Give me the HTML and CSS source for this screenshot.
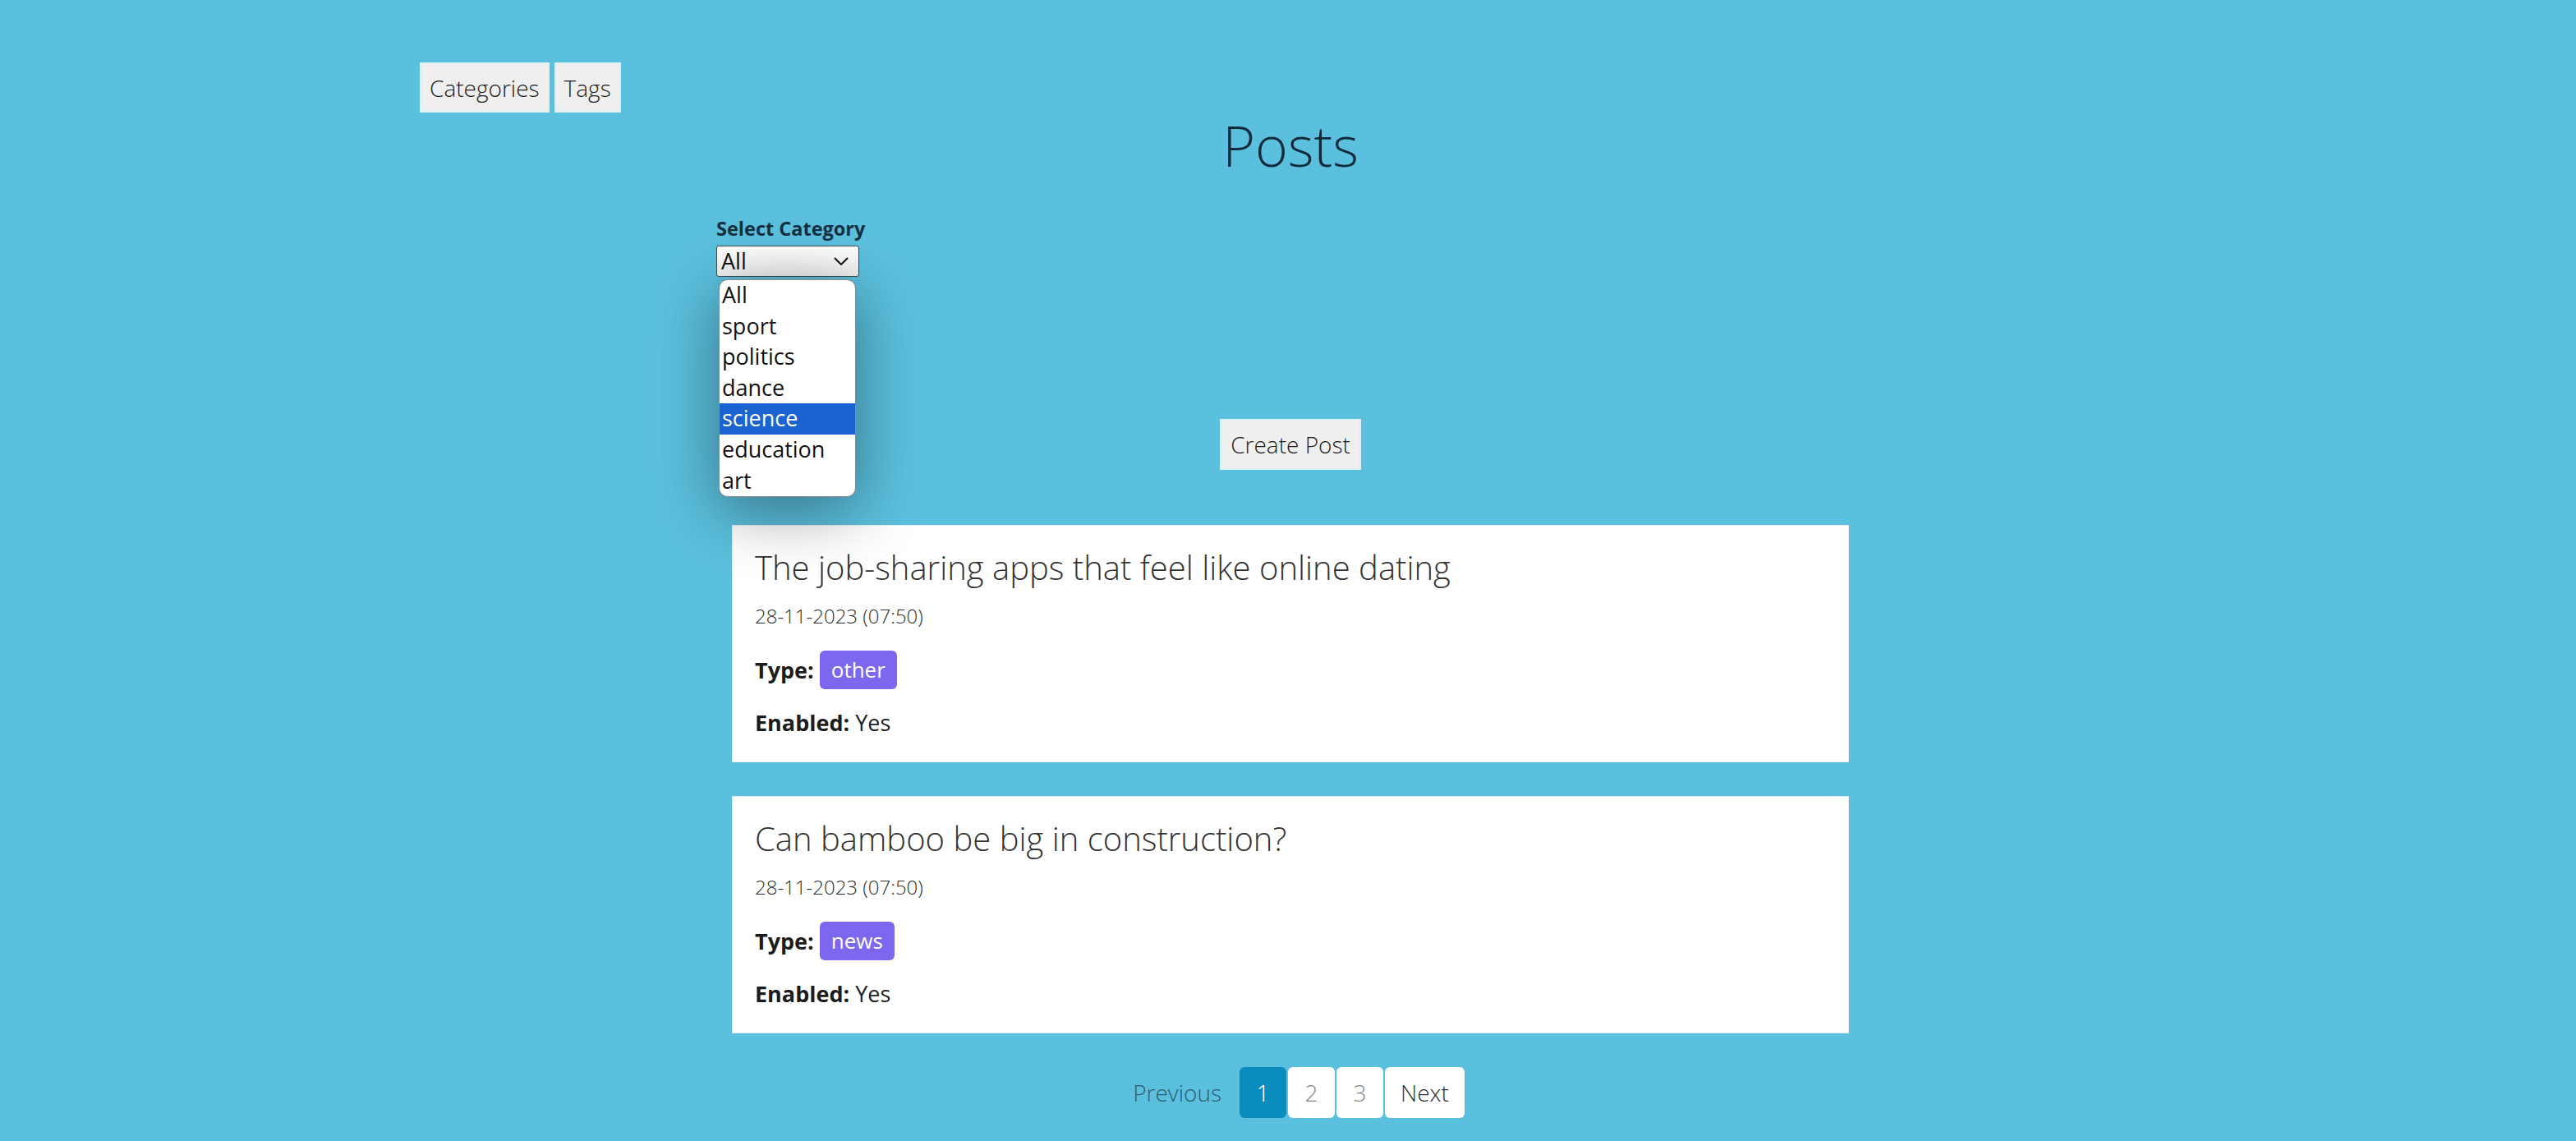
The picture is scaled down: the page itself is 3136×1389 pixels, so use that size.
FILE: index.html
```html
<!DOCTYPE html>
<html lang="en">
<head>
<meta charset="utf-8">
<title>Posts</title>
<link rel="stylesheet" href="styles.css">
</head>
<body>
<nav class="topnav">
  <button class="btn">Categories</button>
  <button class="btn">Tags</button>
</nav>
<main class="main">
  <h1 class="page-title">Posts</h1>
  <div class="filter">
    <label class="filter-label">Select Category</label>
    <div class="select-wrap">
      <div class="select">
        <span>All</span>
        <svg class="chevron" width="18" height="10" viewBox="0 0 18 10"><path d="M1 1 L9 9 L17 1" fill="none" stroke="#111" stroke-width="2"/></svg>
      </div>
      <ul class="dropdown">
        <li>All</li>
        <li>sport</li>
        <li>politics</li>
        <li>dance</li>
        <li class="active">science</li>
        <li>education</li>
        <li>art</li>
      </ul>
    </div>
  </div>
  <div class="create-row">
    <button class="btn btn-create">Create Post</button>
  </div>
  <section class="cards">
    <article class="card">
      <h2 class="card-title">The job-sharing apps that feel like online dating</h2>
      <div class="card-date">28-11-2023 (07:50)</div>
      <div class="card-type"><b>Type:</b><span class="badge">other</span></div>
      <div class="card-enabled"><b>Enabled:</b> Yes</div>
    </article>
    <article class="card">
      <h2 class="card-title">Can bamboo be big in construction?</h2>
      <div class="card-date">28-11-2023 (07:50)</div>
      <div class="card-type"><b>Type:</b><span class="badge">news</span></div>
      <div class="card-enabled"><b>Enabled:</b> Yes</div>
    </article>
  </section>
  <nav class="pagination">
    <span class="page prev">Previous</span>
    <span class="page current">1</span>
    <span class="page num">2</span>
    <span class="page num">3</span>
    <span class="page next">Next</span>
  </nav>
</main>
</body>
</html>
```

FILE: styles.css
```css
* { box-sizing: border-box; }
html, body { margin: 0; padding: 0; }
body {
  background: #5bc0de;
  font-family: "Open Sans", "Noto Sans", sans-serif;
  color: #222;
  height: 1389px;
  overflow: hidden;
}
.topnav {
  display: flex;
  gap: 6px;
  padding: 76px 0 0 511px;
}
.btn {
  font-family: "Open Sans", sans-serif;
  font-weight: 300;
  font-size: 28px;
  color: #1e1e1e;
  background: #efefef;
  border: 2px solid #dfeff4;
  height: 61px;
  padding: 0 10px;
  line-height: 1;
}
.main {
  width: 1398px;
  margin-left: 872px;
}
.page-title {
  margin: 0;
  text-align: center;
  font-weight: 300;
  font-size: 68px;
  line-height: 80px;
  color: #0f2b3a;
}
.filter {
  margin-top: 46px;
}
.filter-label {
  display: block;
  font-weight: 700;
  font-size: 23.5px;
  line-height: 30px;
  color: #12303f;
}
.select-wrap {
  position: relative;
  margin-top: 6px;
  width: 174px;
}
.select {
  position: relative;
  height: 38px;
  width: 174px;
  border: 1px solid #3b4a52;
  border-radius: 3px;
  background: linear-gradient(#ffffff, #f0f0f0);
  font-size: 27px;
  line-height: 36px;
  padding-left: 5px;
  color: #111;
}
.chevron {
  position: absolute;
  right: 12px;
  top: 13px;
}
.dropdown {
  position: absolute;
  left: 3px;
  top: 41px;
  width: 167px;
  margin: 0;
  padding: 0;
  list-style: none;
  background: #fff;
  border: 1px solid #8a8a8a;
  border-radius: 11px;
  overflow: hidden;
  box-shadow: 0 16px 80px rgba(0, 0, 0, 0.42);
  z-index: 5;
}
.dropdown li {
  height: 37.6px;
  line-height: 35px;
  font-size: 27px;
  padding-left: 3px;
  color: #111;
}
.dropdown li.active {
  background: #1b63d0;
  color: #fff;
}
.create-row {
  display: flex;
  justify-content: center;
  margin-top: 173px;
}
.btn-create {
  height: 62px;
  padding: 0 11px;
}
.cards {
  margin: 67px 19px 0;
  display: flex;
  flex-direction: column;
  gap: 41px;
}
.card {
  background: #fff;
  border: 1px solid #e4eef2;
  height: 289px;
  padding: 27px 27px 0;
}
.card-title {
  margin: 0;
  font-weight: 300;
  font-size: 40px;
  line-height: 48px;
  color: #333;
}
.card-date {
  margin-top: 19px;
  font-size: 24px;
  font-weight: 300;
  line-height: 32px;
  color: #2e2e2e;
}
.card-type {
  margin-top: 26px;
  display: flex;
  align-items: center;
  gap: 7px;
  height: 47px;
  font-size: 27px;
}
.card-type b, .card-enabled b { font-weight: 700; color: #1c1c1c; }
.badge {
  background: #7b68ee;
  color: #fff;
  font-weight: 400;
  font-size: 26px;
  border-radius: 6px;
  height: 47px;
  line-height: 46px;
  padding: 0 14px;
}
.card-enabled {
  margin-top: 22px;
  font-size: 27px;
  line-height: 38px;
  color: #222;
}
.pagination {
  margin-top: 41px;
  display: flex;
  justify-content: center;
  gap: 2px;
}
.page {
  height: 62px;
  line-height: 62px;
  font-size: 28px;
  font-weight: 300;
  border-radius: 6px;
  text-align: center;
}
.prev {
  padding: 0 20px;
  color: #2b5f74;
}
.current {
  width: 57px;
  background: #0a8cbf;
  color: #fff;
}
.num {
  width: 57px;
  background: #fff;
  color: #888;
}
.next {
  padding: 0 19px;
  background: #fff;
  color: #333;
}
```
